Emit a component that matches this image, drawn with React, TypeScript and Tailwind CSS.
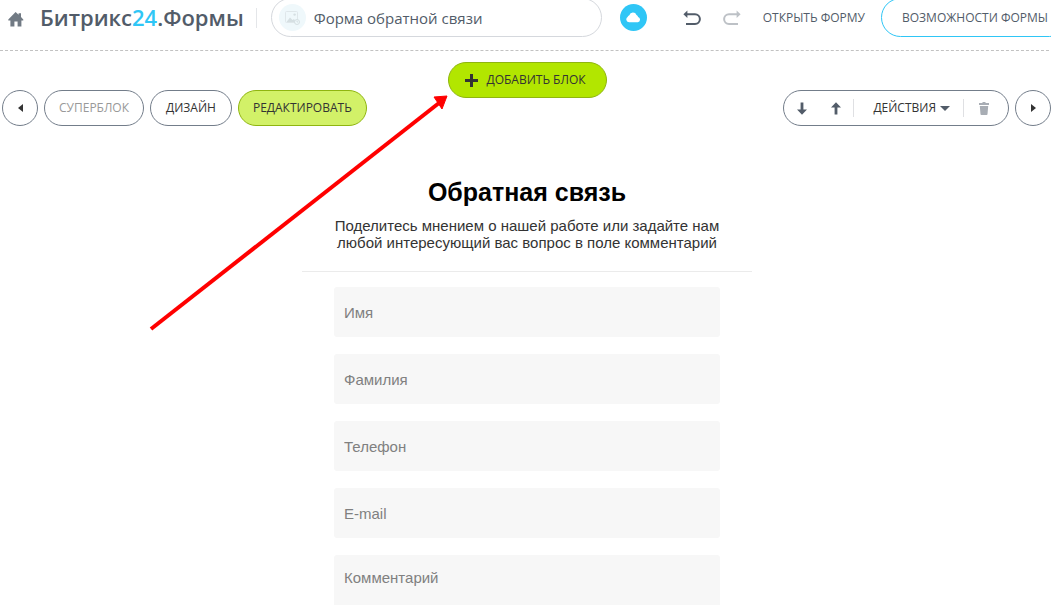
import type { ReactNode } from 'react';

const fields = [
  { name: 'firstName', label: 'Имя', type: 'text' },
  { name: 'lastName', label: 'Фамилия', type: 'text' },
  { name: 'phone', label: 'Телефон', type: 'tel' },
  { name: 'email', label: 'E-mail', type: 'email' },
];

const fieldClass =
  'block w-full rounded-[3px] bg-[#f7f7f7] px-2.5 text-[15px] leading-5 text-[#333] placeholder:text-[#808080] placeholder:opacity-100 outline-none';

function HomeIcon() {
  return (
    <svg width="16" height="15" viewBox="0 0 16 15" fill="#717a84" aria-hidden="true">
      <path d="M7.6 0 10.6 2.8V1.2H13V5L15.3 7.4V8.5H13.4V14.5H9.6V9.6H6.4V14.5H2.4V8.5H.3V7.4Z" />
    </svg>
  );
}

function PictureIcon() {
  return (
    <svg width="15" height="14" viewBox="0 0 15 14" fill="none" aria-hidden="true">
      <rect x=".5" y=".5" width="12" height="11" rx="1" stroke="#dfe7ea" />
      <path d="M1.5 11 5 6.5 7.5 9 9 8l2 3Z" fill="#d5dfe2" />
      <circle cx="9.6" cy="3.6" r="1.2" fill="#d5dfe2" />
      <circle cx="12" cy="11" r="2.5" fill="#eff8fb" stroke="#d5dfe2" />
      <path d="M12 9.6V11h1.2" stroke="#d5dfe2" />
    </svg>
  );
}

function CloudIcon() {
  return (
    <svg width="15" height="11" viewBox="0 0 15 11" fill="#fff" aria-hidden="true">
      <path d="M3.2 10.3A2.9 2.9 0 0 1 1.6 5 2.6 2.6 0 0 1 3.3 3.2 3.8 3.8 0 0 1 10.5 3 3.2 3.2 0 0 1 12.1 4.9 2.8 2.8 0 0 1 11.8 10.3Z" />
    </svg>
  );
}

function TurnIcon({ color, flipped }: { color: string; flipped?: boolean }) {
  return (
    <svg width="18" height="16" viewBox="0 0 18 16" fill="none" aria-hidden="true">
      <g transform={flipped ? 'translate(18 0) scale(-1 1)' : undefined}>
        <path d="M3 4.2H12A4.8 4.8 0 0 1 12 14H3" stroke={color} strokeWidth="2" />
        <path d="M.4 4.2 4.4 .4V8Z" fill={color} />
      </g>
    </svg>
  );
}

function ArrowIcon({ up }: { up?: boolean }) {
  return (
    <svg width="10" height="13" viewBox="0 0 10 13" fill="#525c69" aria-hidden="true">
      <path
        d={
          up
            ? 'M5 .3 10 5.6H6.4V12.5H3.6V5.6H0Z'
            : 'M5 12.7 10 7.4H6.4V.5H3.6V7.4H0Z'
        }
      />
    </svg>
  );
}

function TrashIcon() {
  return (
    <svg width="10" height="13" viewBox="0 0 10 13" fill="#a8adb4" aria-hidden="true">
      <path d="M3.5 0H6.5V1H10V3H0V1H3.5ZM.8 4H9.2L8.5 12.3Q8.4 13 7.6 13H2.4Q1.6 13 1.5 12.3Z" />
    </svg>
  );
}

function CircleButton({ label, children }: { label: string; children: ReactNode }) {
  return (
    <button
      type="button"
      aria-label={label}
      className="flex size-9 shrink-0 items-center justify-center rounded-full border border-[#737d8a]"
    >
      {children}
    </button>
  );
}

function Header() {
  return (
    <header className="-mt-[15px] -mr-[18px] flex h-[66px] items-center border-b border-dashed border-[#c2c2c2] pl-2 text-[#525c69]">
      <a href="#" aria-label="Главная" className="shrink-0 pt-1">
        <HomeIcon />
      </a>
      <div className="ml-4 shrink-0 text-[22px] font-semibold whitespace-nowrap">
        Битрикс<span className="text-[#2fc6f6]">24</span>.Формы
      </div>
      <div className="ml-3 h-5 w-px shrink-0 bg-[#e4e6e9]" />
      <div className="ml-3.5 flex h-[39px] min-w-0 flex-1 items-center gap-2 rounded-full border border-[#d5d8dd] pl-[7px]">
        <span className="flex size-[27px] shrink-0 items-center justify-center rounded-full bg-[#eff8fb]">
          <PictureIcon />
        </span>
        <input
          type="text"
          aria-label="Название формы"
          defaultValue="Форма обратной связи"
          className="h-8 min-w-0 flex-1 bg-transparent text-[15px] outline-none"
        />
      </div>
      <button
        type="button"
        aria-label="Сохранено"
        className="ml-[18px] flex size-[27px] shrink-0 items-center justify-center rounded-full bg-[#2fc6f6]"
      >
        <CloudIcon />
      </button>
      <button type="button" aria-label="Отменить" className="ml-9 shrink-0">
        <TurnIcon color="#525c69" />
      </button>
      <button type="button" aria-label="Повторить" className="ml-[22px] shrink-0">
        <TurnIcon color="#bdc1c6" flipped />
      </button>
      <a href="#" className="ml-[22px] shrink-0 text-xs whitespace-nowrap">
        ОТКРЫТЬ ФОРМУ
      </a>
      <button
        type="button"
        className="ml-4 h-[39px] shrink-0 rounded-full border border-[#2fc6f6] px-5 text-xs whitespace-nowrap"
      >
        ВОЗМОЖНОСТИ ФОРМЫ
      </button>
    </header>
  );
}

function BlockPanel() {
  return (
    <div className="-mt-2 flex items-center justify-between pl-0.5 text-xs text-[#333]">
      <div className="flex gap-1.5">
        <CircleButton label="Назад">
          <svg width="5" height="8" viewBox="0 0 5 8" fill="#333" aria-hidden="true">
            <path d="M5 0V8L0 4Z" />
          </svg>
        </CircleButton>
        <button
          type="button"
          disabled
          className="h-9 rounded-full border border-[#737d8a] px-3.5 text-[#999]"
        >
          СУПЕРБЛОК
        </button>
        <button
          type="button"
          className="h-9 rounded-full border border-[#737d8a] px-[15px] font-medium"
        >
          ДИЗАЙН
        </button>
        <button
          type="button"
          className="h-9 rounded-full border border-[#8fb510] bg-[#d2f168] px-3.5"
        >
          РЕДАКТИРОВАТЬ
        </button>
      </div>
      <div className="flex gap-1.5">
        <div className="flex h-9 items-center rounded-full border border-[#737d8a] pr-[19px] pl-[13px]">
          <button type="button" aria-label="Переместить вниз">
            <ArrowIcon />
          </button>
          <button type="button" aria-label="Переместить вверх" className="ml-6">
            <ArrowIcon up />
          </button>
          <span className="ml-3 h-[18px] w-px bg-[#dfe0e3]" />
          <button type="button" className="ml-[19px] flex items-center gap-1">
            ДЕЙСТВИЯ
            <svg width="10" height="5" viewBox="0 0 10 5" fill="#525c69" aria-hidden="true">
              <path d="M0 0H10L5 5Z" />
            </svg>
          </button>
          <span className="ml-[13px] h-[18px] w-px bg-[#dfe0e3]" />
          <button type="button" aria-label="Удалить" className="ml-[15px]">
            <TrashIcon />
          </button>
        </div>
        <CircleButton label="Вперёд">
          <svg width="5" height="8" viewBox="0 0 5 8" fill="#333" aria-hidden="true">
            <path d="M0 0V8L5 4Z" />
          </svg>
        </CircleButton>
      </div>
    </div>
  );
}

function FeedbackForm() {
  return (
    <form className="mx-auto mt-[50px] w-full max-w-[450px] font-['Liberation_Sans',Arial,sans-serif]">
      <div className="border-b border-[#ebebeb] pb-5 text-center">
        <h1 className="text-[25px] leading-8 font-bold text-black">Обратная связь</h1>
        <p className="mt-[9px] px-8 text-[15px] leading-[17px] text-[#333]">
          Поделитесь мнением о нашей работе или задайте нам любой интересующий вас вопрос в поле
          комментарий
        </p>
      </div>
      <div className="flex flex-col gap-[17px] px-8 pt-[15px]">
        {fields.map((field) => (
          <input
            key={field.name}
            name={field.name}
            type={field.type}
            aria-label={field.label}
            placeholder={field.label}
            className={`h-[50px] ${fieldClass}`}
          />
        ))}
        <textarea
          name="comment"
          aria-label="Комментарий"
          placeholder="Комментарий"
          className={`h-24 resize-none py-[13px] ${fieldClass}`}
        />
      </div>
    </form>
  );
}

export default function App() {
  return (
    <div className="relative h-screen overflow-hidden bg-white font-['Open_Sans',sans-serif]">
      <Header />
      <main>
        <div className="flex justify-center pt-[11px] pl-1">
          <button
            type="button"
            className="flex h-9 items-center gap-2 rounded-full border border-[#8fb510] bg-[#b2e600] pr-5 pl-4 text-xs text-[#333]"
          >
            <svg width="13" height="13" viewBox="0 0 13 13" fill="#333" aria-hidden="true">
              <path d="M5 0H8V5H13V8H8V13H5V8H0V5H5Z" />
            </svg>
            ДОБАВИТЬ БЛОК
          </button>
        </div>
        <BlockPanel />
        <div className="pl-[3px]">
          <FeedbackForm />
        </div>
      </main>

      {/* pointer to the "add block" button */}
      <svg
        width="300"
        height="236"
        viewBox="0 0 300 236"
        className="pointer-events-none absolute top-[95px] left-[149px]"
        aria-hidden="true"
      >
        <path d="M2 234 290 8" stroke="#f00" strokeWidth="4" />
        <path d="M298 1 293 14 285 2Z" fill="#f00" stroke="#f00" strokeWidth="1" />
      </svg>
    </div>
  );
}
